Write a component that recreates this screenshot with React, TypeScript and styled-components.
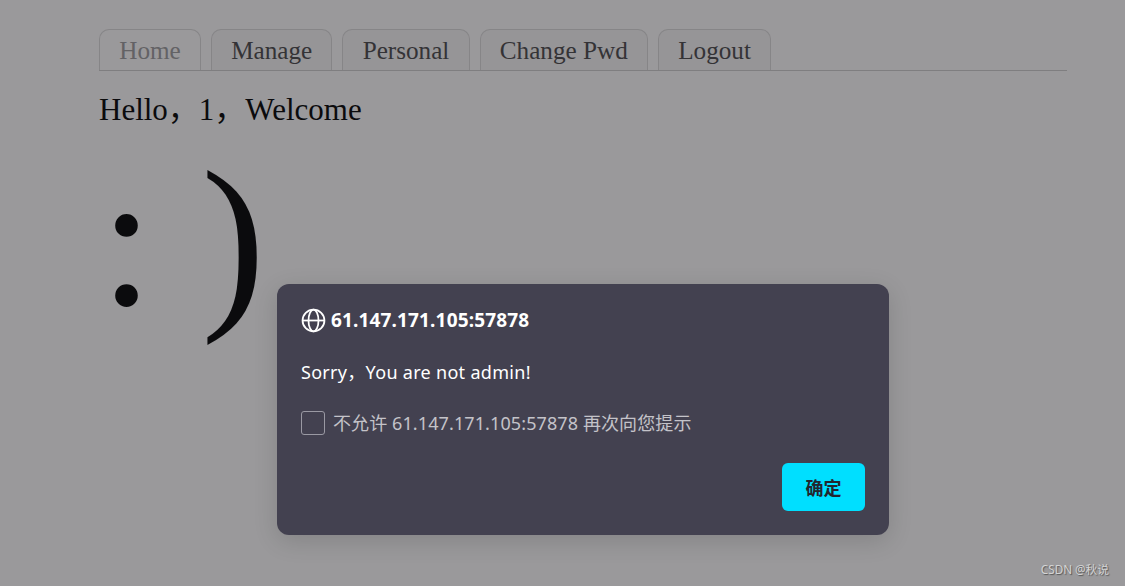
import { createGlobalStyle, styled } from "styled-components";

const GlobalStyle = createGlobalStyle`
  html, body { margin: 0; padding: 0; height: 100%; }
  body {
    background: #9a999b;
    font-family: "Liberation Serif", "Noto Sans CJK SC", serif;
    color: #0b0b0d;
    overflow: hidden;
  }
`;

const Page = styled.div`
  width: 968px;
  margin-left: 99px;
  padding-top: 29px;
`;

const Tabs = styled.ul`
  display: flex;
  gap: 10px;
  list-style: none;
  margin: 0;
  padding: 0;
  border-bottom: 1px solid #7f7e80;
`;

const Tab = styled.li<{ $active?: boolean }>`
  height: 40px;
  line-height: 41px;
  padding: 0 19.2px;
  border: 1px solid #868587;
  border-bottom: 0;
  border-radius: 10px 10px 0 0;
  font-size: 25.2px;
  color: ${(p) => (p.$active ? "#636265" : "#343336")};
  background: ${(p) => (p.$active ? "transparent" : "#969597")};
`;

const Greeting = styled.p`
  margin: 20px 0 0;
  font-size: 31px;
  line-height: 38px;
`;

const Smile = styled.div`
  padding-left: 1px;
  font-size: 192px;
  line-height: 222px;
  white-space: pre;
`;

const Dialog = styled.div`
  position: absolute;
  left: 277px;
  top: 284px;
  width: 612px;
  height: 251px;
  box-sizing: border-box;
  padding: 24px;
  border-radius: 12px;
  background: #434150;
  box-shadow: 0 6px 24px rgba(0, 0, 0, 0.14);
  font-family: "Noto Sans", "Noto Sans CJK SC", sans-serif;
  display: flex;
  flex-direction: column;
`;

const Title = styled.div`
  display: flex;
  align-items: center;
  gap: 5px;
  height: 24px;
  font-size: 19px;
  letter-spacing: 0.15px;
  font-weight: 700;
  color: #ffffff;
`;

const Message = styled.div`
  margin-top: 28px;
  font-size: 18px;
  letter-spacing: 0.3px;
  line-height: 24px;
  color: #ffffff;
`;

const CheckRow = styled.label`
  display: flex;
  align-items: center;
  gap: 8px;
  margin-top: 27px;
  font-size: 18px;
  letter-spacing: 0.1px;
  line-height: 24px;
  color: #c4c3c9;
`;

const Box = styled.span`
  width: 22px;
  height: 22px;
  border: 1px solid #9a99a3;
  border-radius: 3px;
`;

const Actions = styled.div`
  display: flex;
  justify-content: flex-end;
  margin-top: auto;
`;

const OkButton = styled.button`
  width: 83px;
  height: 48px;
  border: 0;
  border-radius: 6px;
  background: #00dfff;
  color: #22262f;
  font-family: "Noto Sans CJK SC", sans-serif;
  font-size: 18px;
  font-weight: 700;
`;

const Watermark = styled.div`
  position: absolute;
  right: 16px;
  bottom: 10px;
  font-family: "Noto Sans", "Noto Sans CJK SC", sans-serif;
  font-size: 11.7px;
  line-height: 14px;
  color: #d4d4d4;
  text-shadow: 1px 1px 1px #555;
`;

function GlobeIcon() {
  return (
    <svg width="25" height="25" viewBox="0 0 24 24" fill="none" stroke="#fff" strokeWidth="1.7">
      <circle cx="12" cy="12" r="10.5" />
      <ellipse cx="12" cy="12" rx="4.8" ry="10.5" />
      <path d="M1.5 12h21" />
    </svg>
  );
}

export default function App() {
  return (
    <>
      <GlobalStyle />
      <Page>
        <Tabs>
          <Tab $active>Home</Tab>
          <Tab>Manage</Tab>
          <Tab>Personal</Tab>
          <Tab>Change Pwd</Tab>
          <Tab>Logout</Tab>
        </Tabs>
        <Greeting>Hello，1，Welcome</Greeting>
        <Smile>: )</Smile>
      </Page>
      <Dialog>
        <Title>
          <GlobeIcon />
          61.147.171.105:57878
        </Title>
        <Message>Sorry，You are not admin!</Message>
        <CheckRow>
          <Box />
          不允许 61.147.171.105:57878 再次向您提示
        </CheckRow>
        <Actions>
          <OkButton>确定</OkButton>
        </Actions>
      </Dialog>
      <Watermark>CSDN @秋说</Watermark>
    </>
  );
}
